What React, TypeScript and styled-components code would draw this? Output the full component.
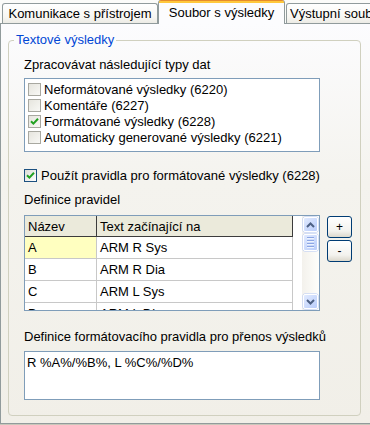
import React from 'react';
import styled, { createGlobalStyle } from 'styled-components';

const GlobalStyle = createGlobalStyle`
  html, body {
    margin: 0;
    padding: 0;
  }
  body {
    width: 370px;
    height: 425px;
    overflow: hidden;
    background: #fbfbf9;
    font-family: 'Liberation Sans', Arial, sans-serif;
    font-size: 13px;
    color: #000;
  }
`;

const TYPES = [
  { label: 'Neformátované výsledky (6220)', checked: false },
  { label: 'Komentáře (6227)', checked: false },
  { label: 'Formátované výsledky (6228)', checked: true },
  { label: 'Automaticky generované výsledky (6221)', checked: false },
];

const RULES = [
  { name: 'A', text: 'ARM R Sys' },
  { name: 'B', text: 'ARM R Dia' },
  { name: 'C', text: 'ARM L Sys' },
  { name: 'D', text: 'ARM L Dia' },
];

const Check = () => (
  <svg width="9" height="9" viewBox="0 0 9 9">
    <path d="M1 4.2 L3.4 6.6 L8 1.8" stroke="#21a121" strokeWidth="2" fill="none" />
  </svg>
);

const Arrow = ({ up }: { up?: boolean }) => (
  <svg width="9" height="6" viewBox="0 0 9 6">
    <path
      d={up ? 'M1 5 L4.5 1.5 L8 5' : 'M1 1 L4.5 4.5 L8 1'}
      stroke="#4d6185"
      strokeWidth="2"
      fill="none"
    />
  </svg>
);

const App = () => {
  return (
    <Window>
      <GlobalStyle />
      <TabStrip>
        <Tab $w={156}>Komunikace s přístrojem</Tab>
        <Tab $w={127} $active>
          Soubor s výsledky
        </Tab>
        <Tab $w={110} $left>
          Výstupní soubor
        </Tab>
      </TabStrip>
      <Panel>
        <Group>
          <Legend>Textové výsledky</Legend>
          <Content>
            <Label>Zpracovávat následující typy dat</Label>
            <ListBox>
              {TYPES.map((t) => (
                <ListItem key={t.label}>
                  <CheckBox $flat>{t.checked && <Check />}</CheckBox>
                  {t.label}
                </ListItem>
              ))}
            </ListBox>
            <CheckRow>
              <CheckBox>
                <Check />
              </CheckBox>
              Použít pravidla pro formátované výsledky (6228)
            </CheckRow>
            <Label $top={9}>Definice pravidel</Label>
            <GridRow>
              <Grid>
                <Table>
                  <HeaderRow>
                    <HeadCell $w={72}>Název</HeadCell>
                    <HeadCell $w={196}>Text začínající na</HeadCell>
                  </HeaderRow>
                  {RULES.map((r, i) => (
                    <Row key={r.name}>
                      <Cell $w={72} $current={i === 0}>
                        {r.name}
                      </Cell>
                      <Cell $w={196}>{r.text}</Cell>
                    </Row>
                  ))}
                </Table>
                <ScrollBar>
                  <ScrollButton>
                    <Arrow up />
                  </ScrollButton>
                  <Thumb>
                    <Grip />
                    <Grip />
                    <Grip />
                    <Grip />
                  </Thumb>
                  <Track />
                  <ScrollButton>
                    <Arrow />
                  </ScrollButton>
                </ScrollBar>
              </Grid>
              <Buttons>
                <Button>+</Button>
                <Button>-</Button>
              </Buttons>
            </GridRow>
            <Label $top={18}>Definice formátovacího pravidla pro přenos výsledků</Label>
            <TextBox>R %A%/%B%, L %C%/%D%</TextBox>
          </Content>
        </Group>
      </Panel>
    </Window>
  );
};

export default App;

const Window = styled.div`
  width: 370px;
  height: 425px;
  display: flex;
  flex-direction: column;
  overflow: hidden;
`;

const TabStrip = styled.div`
  display: flex;
  align-items: flex-end;
  height: 23px;
  padding-left: 2px;
  position: relative;
  z-index: 1;
`;

const Tab = styled.div<{ $w: number; $active?: boolean; $left?: boolean }>`
  box-sizing: border-box;
  flex: none;
  width: ${(p) => p.$w}px;
  height: ${(p) => (p.$active ? 24 : 20)}px;
  margin-bottom: ${(p) => (p.$active ? -1 : 0)}px;
  margin-left: ${(p) => (p.$left ? 1 : 0)}px;
  display: flex;
  align-items: center;
  justify-content: ${(p) => (p.$left ? 'flex-start' : 'center')};
  padding: ${(p) => (p.$active ? '2px 0 2px' : '0 0 1px')};
  padding-left: ${(p) => (p.$left ? 3 : 0)}px;
  border: 1px solid #919b9c;
  border-top: ${(p) => (p.$active ? 'none' : '1px solid #919b9c')};
  border-bottom: none;
  border-radius: 3px 3px 0 0;
  white-space: nowrap;
  overflow: hidden;
  background: ${(p) =>
    p.$active
      ? 'linear-gradient(#e68b2c 0 1px, #ffc83c 1px 3px, #fcfcfe 3px)'
      : 'linear-gradient(#ffffff, #f7f6f2 70%, #ecebe5)'};
`;

const Panel = styled.div`
  box-sizing: border-box;
  width: 390px;
  height: 401px;
  flex: none;
  border: 1px solid #919b9c;
  box-shadow: 0 1px 0 #c9c7ba;
  background: linear-gradient(#fcfcfe, #f4f3ee 40%, #f1efe8);
  padding: 8px 0 0 7px;
`;

const Group = styled.fieldset`
  box-sizing: border-box;
  width: 353px;
  margin: 0;
  padding: 9px 7px 15px 5px;
  border: 1px solid #d0d0bf;
  border-radius: 4px;
`;

const Legend = styled.legend`
  padding: 0 2px;
  line-height: 16px;
  color: #0046d5;
`;

const Content = styled.div`
  display: flex;
  flex-direction: column;
  align-items: flex-start;
  padding-left: 10px;
`;

const Label = styled.div<{ $top?: number }>`
  line-height: 16px;
  margin-top: ${(p) => p.$top ?? 0}px;
  white-space: nowrap;
`;

const ListBox = styled.div`
  box-sizing: border-box;
  width: 296px;
  height: 74px;
  margin-top: 5px;
  padding-top: 2px;
  border: 1px solid #7f9db9;
  background: #fff;
`;

const ListItem = styled.div`
  display: flex;
  align-items: center;
  gap: 3px;
  height: 16px;
  padding-left: 3px;
  white-space: nowrap;
`;

const CheckBox = styled.span<{ $flat?: boolean }>`
  box-sizing: border-box;
  flex: none;
  width: 13px;
  height: 13px;
  display: inline-flex;
  align-items: center;
  justify-content: center;
  border: 1px solid ${(p) => (p.$flat ? '#a8a8a0' : '#1c5180')};
  background: ${(p) =>
    p.$flat ? 'linear-gradient(135deg, #e6e5de, #f8f8f5)' : 'linear-gradient(135deg, #dcdcd7, #ffffff)'};
`;

const CheckRow = styled.div`
  display: flex;
  align-items: center;
  gap: 4px;
  height: 16px;
  margin-top: 15px;
  white-space: nowrap;
`;

const GridRow = styled.div`
  display: flex;
  align-items: flex-start;
  gap: 7px;
  margin-top: 7px;
`;

const Grid = styled.div`
  box-sizing: border-box;
  width: 296px;
  height: 96px;
  display: flex;
  border: 1px solid #7f9db9;
  background: #fff;
`;

const Table = styled.div`
  flex: 1;
  overflow: hidden;
`;

const HeaderRow = styled.div`
  display: flex;
  height: 21px;
`;

const HeadCell = styled.div<{ $w: number }>`
  box-sizing: border-box;
  width: ${(p) => p.$w}px;
  padding-left: 3px;
  display: flex;
  align-items: center;
  background: #ebeadb;
  border-right: 1px solid #3c3c3c;
  border-bottom: 1px solid #3c3c3c;
  white-space: nowrap;
`;

const Row = styled.div`
  display: flex;
  height: 22px;
`;

const Cell = styled.div<{ $w: number; $current?: boolean }>`
  box-sizing: border-box;
  width: ${(p) => p.$w}px;
  padding-left: 3px;
  display: flex;
  align-items: center;
  background: ${(p) => (p.$current ? '#ffffc0' : '#fff')};
  border-right: 1px solid #c8c8c8;
  border-bottom: 1px solid #c8c8c8;
  white-space: nowrap;
`;

const ScrollBar = styled.div`
  width: 17px;
  flex: none;
  display: flex;
  flex-direction: column;
  background: linear-gradient(90deg, #f3f1ec, #fefefb);
`;

const ScrollButton = styled.div`
  box-sizing: border-box;
  width: 15px;
  height: 15px;
  margin: 1px;
  display: flex;
  align-items: center;
  justify-content: center;
  border: 1px solid #fff;
  border-radius: 2px;
  background: linear-gradient(135deg, #e1eafe, #b9cdfb);
  box-shadow: 0 0 0 0.5px #b4c8f6;
`;

const Thumb = styled(ScrollButton)`
  height: 17px;
  margin-top: 1px;
  flex-direction: column;
  gap: 1px;
`;

const Grip = styled.span`
  width: 7px;
  height: 1px;
  background: #8ca6e4;
  border-bottom: 1px solid #eef4fe;
`;

const Track = styled.div`
  flex: 1;
`;

const Buttons = styled.div`
  display: flex;
  flex-direction: column;
  gap: 2px;
  margin-top: 1px;
`;

const Button = styled.div`
  box-sizing: border-box;
  width: 25px;
  height: 22px;
  display: flex;
  align-items: center;
  justify-content: center;
  border: 1px solid #003c74;
  border-radius: 3px;
  background: linear-gradient(#ffffff, #f3f2ee 70%, #dcd8cc);
  font-size: 12px;
`;

const TextBox = styled.div`
  box-sizing: border-box;
  width: 296px;
  height: 49px;
  margin-top: 6px;
  padding: 3px 2px;
  line-height: 16px;
  border: 1px solid #7f9db9;
  background: #fff;
  white-space: nowrap;
`;
